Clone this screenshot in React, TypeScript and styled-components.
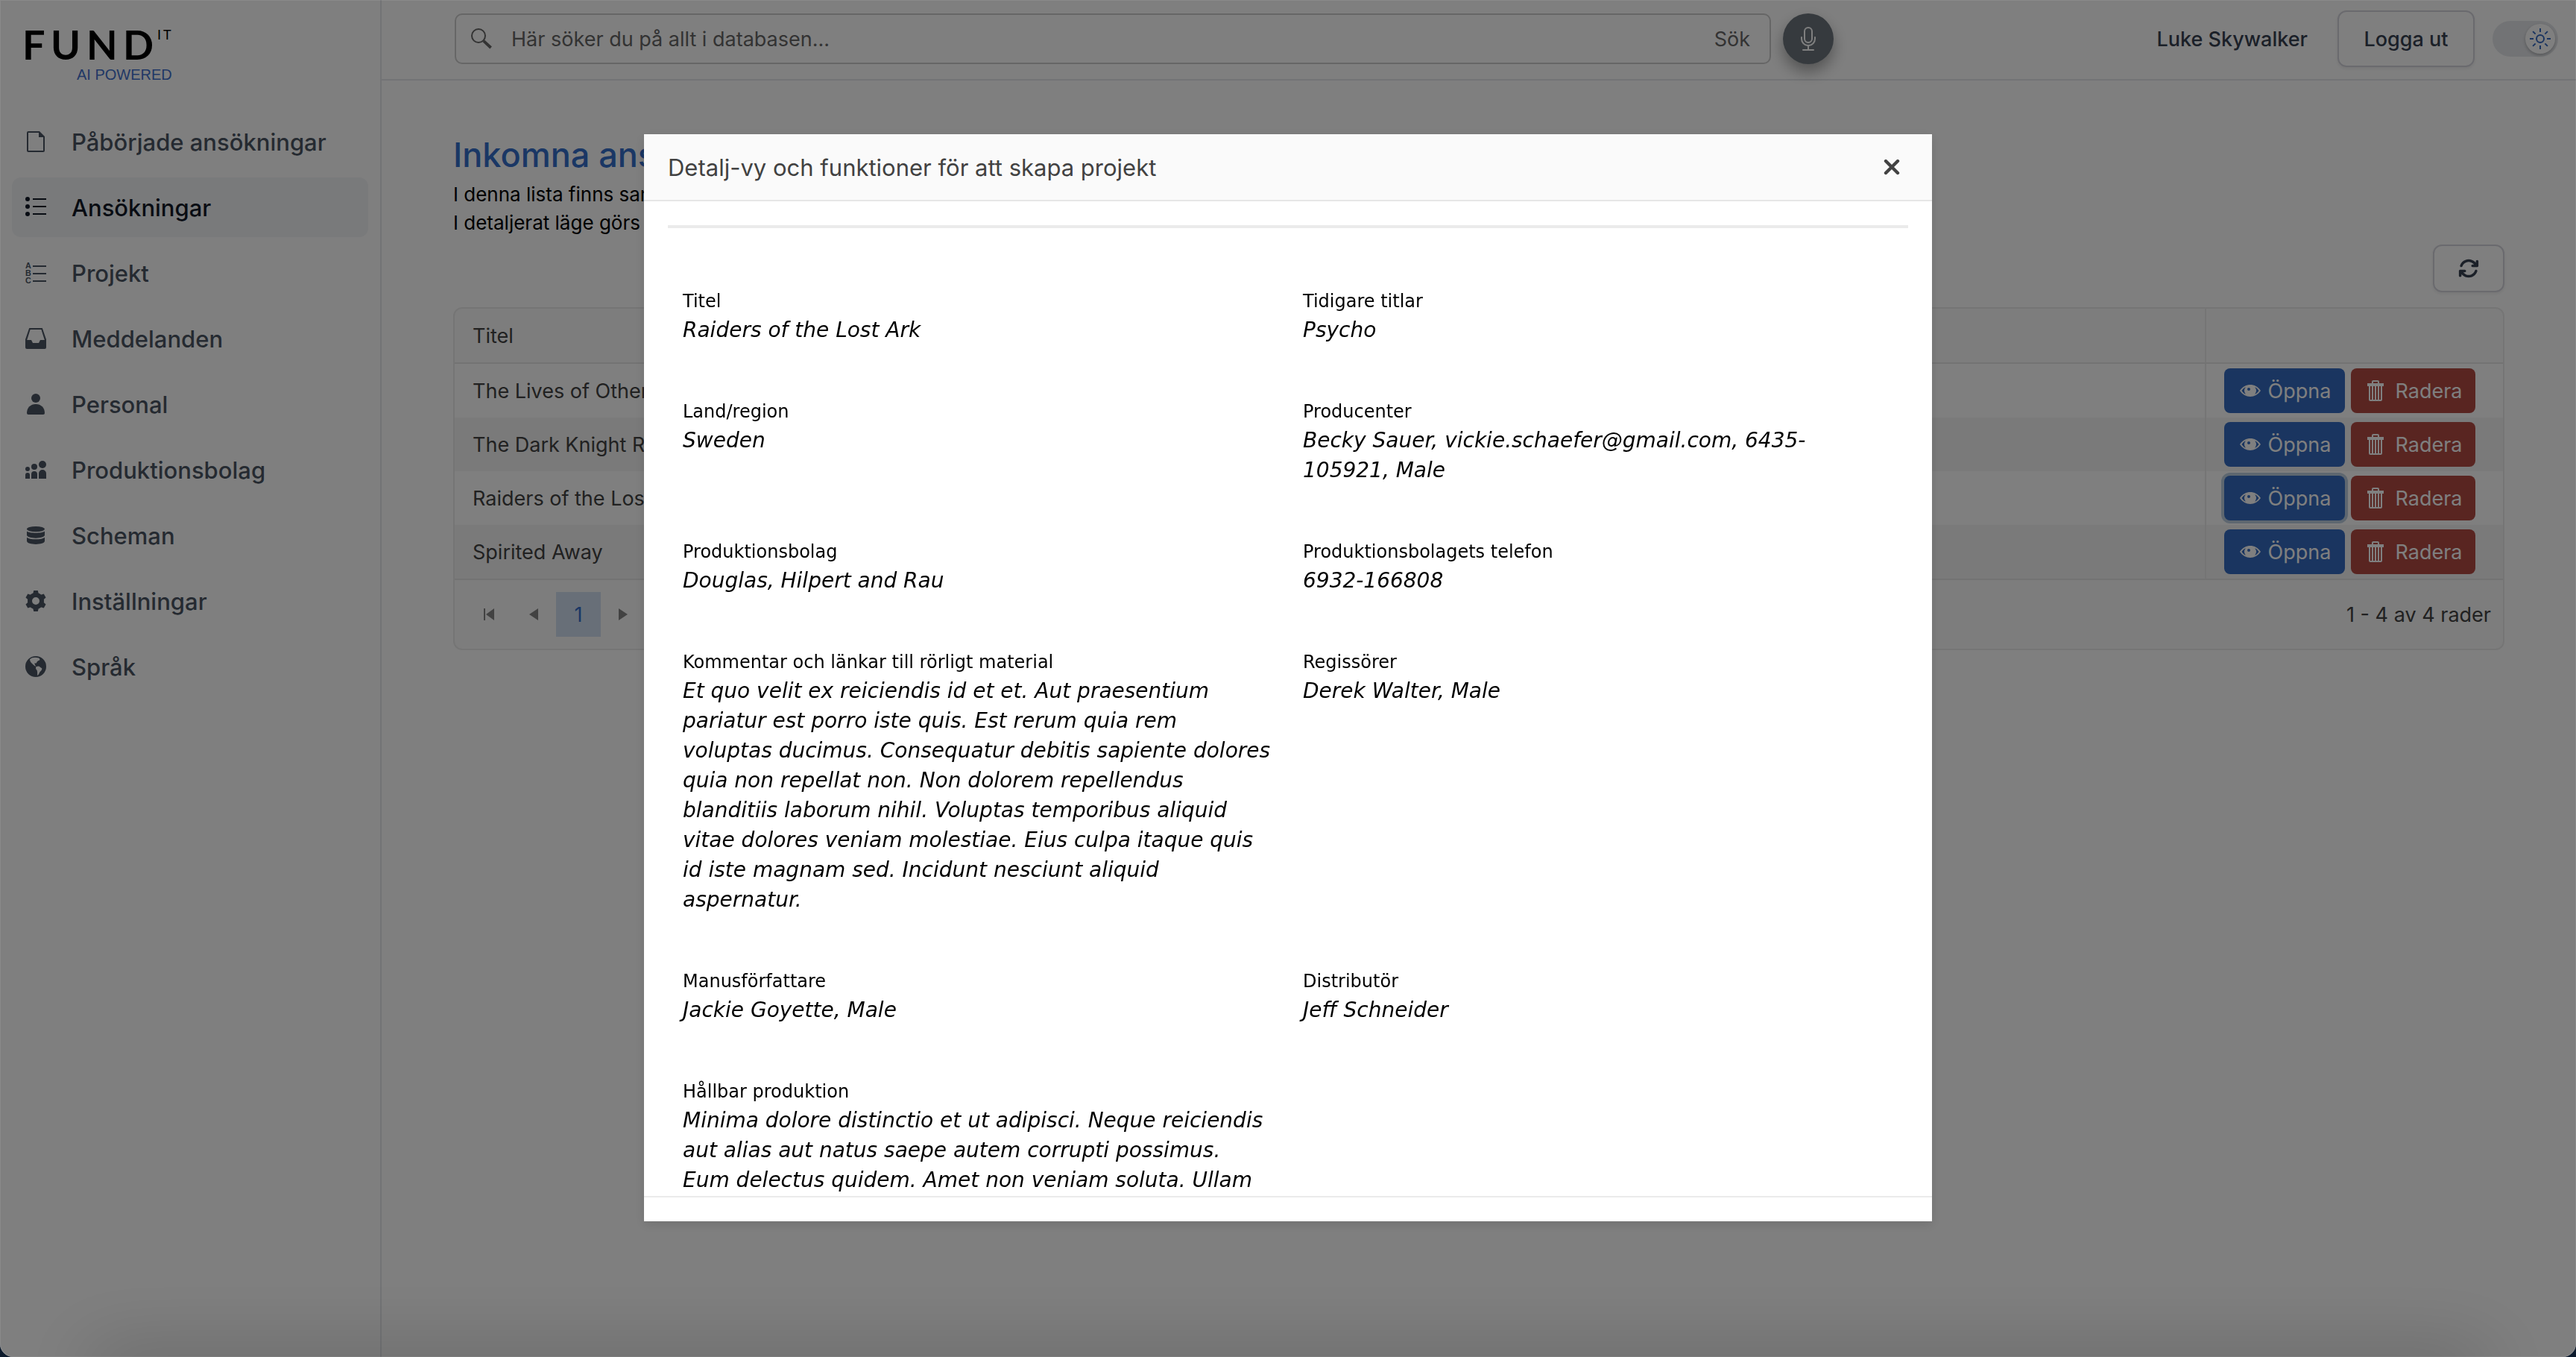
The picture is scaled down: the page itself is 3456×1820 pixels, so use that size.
import React from "react";
import styled, { createGlobalStyle } from "styled-components";
import { BsMic } from "react-icons/bs";
import { FaArrowsRotate } from "react-icons/fa6";

const UI = `Inter, Roboto, "Liberation Sans", sans-serif`;
const DETAIL = `"DejaVu Sans", "Noto Sans", sans-serif`;

const GlobalStyle = createGlobalStyle`
  *, *::before, *::after { box-sizing: border-box; }
  html, body { margin: 0; background: #0c1a2c; overflow: hidden; }
  body { font-family: ${UI}; color: #424242; }
  button, input { font-family: inherit; }
  h1, h2, p, ul, dl, dd { margin: 0; padding: 0; }
`;

/* ---------- shell ---------- */
const Shell = styled.div`
  display: flex;
  min-height: 100vh;
  background: #fff;
  border-radius: 0 0 18px 18px;
`;
const Sidebar = styled.aside`
  width: 512px;
  flex: none;
  border-right: 2px solid #e5e7eb;
`;
const LogoLink = styled.a`
  display: block;
  padding: 16px 28px 0;
  height: 142px;
`;
const NavList = styled.ul`
  list-style: none;
  display: flex;
  flex-direction: column;
  gap: 8px;
  padding: 8px 16px;
`;
const NavLink = styled.a<{ $active?: boolean }>`
  display: flex;
  align-items: center;
  gap: 32px;
  height: 80px;
  padding: 0 16px;
  border-radius: 12px;
  font-size: 31px;
  font-weight: 500;
  text-decoration: none;
  color: ${(p) => (p.$active ? "#111827" : "#4b5563")};
  background: ${(p) => (p.$active ? "#f3f4f6" : "transparent")};
`;
const Column = styled.div`
  flex: 1;
  min-width: 0;
`;

/* ---------- top bar ---------- */
const TopBar = styled.header`
  display: flex;
  align-items: center;
  height: 108px;
  padding: 0 24px 2px 98px;
  border-bottom: 2px solid #e5e7eb;
`;
const SearchForm = styled.form`
  display: flex;
  align-items: center;
  flex: 0 1 1766px;
  height: 68px;
  padding: 0 18px;
  gap: 24px;
  border: 2px solid #ccc;
  border-radius: 10px;
  color: #666;
`;
const SearchInput = styled.input`
  flex: 1;
  min-width: 0;
  border: 0;
  outline: 0;
  padding: 0;
  background: transparent;
  font-size: 27px;
  color: #666;
  &::placeholder { color: #666; opacity: 1; }
`;
const SearchButton = styled.button`
  border: 0;
  padding: 0 8px;
  background: transparent;
  font-size: 27px;
  color: #666;
`;
const MicButton = styled.button`
  display: grid;
  place-items: center;
  width: 68px;
  height: 68px;
  margin-left: 16px;
  padding: 0;
  border: 0;
  border-radius: 50%;
  background: #6c757d;
  color: #fff;
  box-shadow: 0 10px 20px rgba(0, 0, 0, 0.35);
`;
const Account = styled.div`
  display: flex;
  align-items: center;
  margin-left: auto;
`;
const UserName = styled.span`
  font-size: 27px;
  font-weight: 500;
  color: #374151;
  margin-right: 40px;
`;
const OutlineButton = styled.button<{ $w: number; $h: number }>`
  display: grid;
  place-items: center;
  width: ${(p) => p.$w}px;
  height: ${(p) => p.$h}px;
  padding: 0;
  border: 2px solid #d4d4dc;
  border-radius: 12px;
  background: transparent;
  font-size: 27px;
  font-weight: 500;
  color: #374151;
  box-shadow: 0 2px 4px rgba(0, 0, 0, 0.08);
`;
const ThemeSwitch = styled.button`
  display: flex;
  justify-content: flex-end;
  width: 88px;
  height: 48px;
  margin-left: 24px;
  padding: 4px;
  border: 0;
  border-radius: 24px;
  background: #e5e7eb;
`;
const Knob = styled.span`
  display: grid;
  place-items: center;
  width: 40px;
  height: 40px;
  border-radius: 50%;
  background: #fff;
  box-shadow: 0 2px 4px rgba(0, 0, 0, 0.25);
`;

/* ---------- page ---------- */
const Page = styled.main`
  padding: 76px 96px 0;
`;
const Heading = styled.h1`
  font-size: 45px;
  line-height: 48px;
  font-weight: 500;
  color: #346eca;
`;
const Intro = styled.p`
  margin-top: 10px;
  font-size: 26px;
  line-height: 38px;
  color: #000;
`;
const Tools = styled.div`
  display: flex;
  justify-content: flex-end;
  margin: 10px 0 20px;
`;
const Grid = styled.section`
  border: 2px solid #ebebeb;
  border-radius: 12px;
  overflow: hidden;
  background: #fafafa;
`;
const Table = styled.table`
  width: 100%;
  border-collapse: separate;
  border-spacing: 0;
  font-size: 27px;
  th, td { text-align: left; font-weight: 400; padding: 0 24px; }
  th { height: 74px; border-bottom: 2px solid #e6e6e6; }
  td { height: 72px; }
  th + th, td + td { border-left: 2px solid #ebebeb; width: 400px; }
  tbody tr { background: #fff; }
  tbody tr:nth-child(even) { background: #f5f5f5; }
`;
const RowActions = styled.div`
  display: flex;
  gap: 8px;
`;
const ActionButton = styled.button<{ $danger?: boolean; $focused?: boolean }>`
  display: flex;
  align-items: center;
  justify-content: center;
  gap: ${(p) => (p.$danger ? 10 : 8)}px;
  width: ${(p) => (p.$danger ? 167 : 162)}px;
  height: 60px;
  padding: 0;
  border: 0;
  border-radius: 8px;
  font-size: 27px;
  color: #fff;
  background: ${(p) => (p.$danger ? "#b24a43" : "#346bc0")};
  box-shadow: ${(p) => (p.$focused ? "0 0 0 4px #bccee0" : "none")};
`;
const Pager = styled.nav`
  display: flex;
  align-items: center;
  height: 94px;
  padding: 0 16px;
  border-top: 2px solid #e6e6e6;
  font-size: 27px;
`;
const PagerButton = styled.button<{ $current?: boolean }>`
  display: grid;
  place-items: center;
  width: 60px;
  height: 60px;
  padding: 0;
  border: 0;
  font-size: 27px;
  color: ${(p) => (p.$current ? "#346eca" : "#858585")};
  background: ${(p) => (p.$current ? "#d0dff0" : "transparent")};
`;
const PagerInfo = styled.span`
  margin-left: auto;
`;

/* ---------- dialog ---------- */
const Overlay = styled.div`
  position: fixed;
  inset: 0;
  display: flex;
  flex-direction: column;
  align-items: center;
  padding: 180px 0 182px;
  overflow: hidden;
  border-radius: 0 0 18px 18px;
  background: rgba(0, 0, 0, 0.5);
  box-shadow: inset 0 0 0 1px rgba(255, 255, 255, 0.08);

  &::after {
    content: "";
    position: absolute;
    left: 120px;
    right: 120px;
    bottom: -40px;
    height: 40px;
    box-shadow: 0 0 100px rgba(0, 0, 0, 0.3);
  }
`;
const Dialog = styled.section`
  display: flex;
  flex-direction: column;
  flex: 1;
  min-height: 0;
  width: 50%;
  background: #fff;
  box-shadow: 0 4px 14px rgba(0, 0, 0, 0.12);
`;
const DialogBar = styled.header`
  display: flex;
  align-items: center;
  justify-content: space-between;
  height: 90px;
  flex: none;
  padding: 0 36px 0 32px;
  background: #fafafa;
  border-bottom: 2px solid #e6e6e6;
`;
const DialogTitle = styled.h2`
  font-size: 31px;
  font-weight: 400;
  color: #424242;
`;
const CloseButton = styled.button`
  display: grid;
  place-items: center;
  width: 36px;
  height: 36px;
  padding: 0;
  border: 0;
  background: transparent;
  color: #424242;
`;
const DialogBody = styled.div`
  flex: 1;
  min-height: 0;
  overflow: hidden;
  padding: 32px 32px 0;
  font-family: ${DETAIL};
  color: #000;
`;
const Details = styled.dl`
  display: grid;
  grid-template-columns: 1fr 1fr;
  row-gap: 70px;
  border-top: 4px solid #ebebeb;
  padding-top: 79px;
`;
const Field = styled.div`
  padding: 0 20px;
`;
const Term = styled.dt`
  font-size: 24px;
  line-height: 38px;
`;
const Value = styled.dd`
  font-size: 28px;
  line-height: 40px;
  font-style: italic;
  white-space: pre-line;
`;
const DialogFoot = styled.footer`
  height: 34px;
  flex: none;
  border-top: 2px solid #ebebeb;
`;

/* ---------- icons on a 16-unit grid ---------- */
const IconSvg = styled.svg`
  flex: none;
  width: 32px;
  height: 32px;
  fill: currentColor;
`;
const Icon = ({ children }: { children: React.ReactNode }) => (
  <IconSvg viewBox="0 0 16 16" aria-hidden="true">{children}</IconSvg>
);
const FileIcon = () => (
  <Icon>
    <path fillRule="evenodd" d="M3 1h7.500L14 4.500V14a1 1 0 0 1-1 1H3a1 1 0 0 1-1-1V2a1 1 0 0 1 1-1zm0 1v12h10V5h-3V2z" />
  </Icon>
);
const ListIcon = () => (
  <Icon>
    <circle cx="2.5" cy="2.5" r="1.5" />
    <circle cx="2.5" cy="7.5" r="1.5" />
    <circle cx="2.5" cy="12.5" r="1.5" />
    <path d="M6 2h9v1H6zM6 7h9v1H6zM6 12h9v1H6z" />
  </Icon>
);
const AbcListIcon = () => (
  <Icon>
    <g fontFamily="Liberation Sans, sans-serif" fontWeight="700" fontSize="5.4" textAnchor="middle">
      <text x="3" y="5">A</text>
      <text x="3" y="10">B</text>
      <text x="3" y="15">C</text>
    </g>
    <path d="M6 3h9v1H6zM6 8h9v1H6zM6 13h9v1H6z" />
  </Icon>
);
const InboxIcon = () => (
  <Icon>
    <path fillRule="evenodd" d="M3.6 1h8.8L15 8.6V14a1 1 0 0 1-1 1H2a1 1 0 0 1-1-1V8.6zM4.3 2 2.1 9H5l1 2h4l1-2h2.9L11.7 2z" />
  </Icon>
);
const UserIcon = () => (
  <Icon>
    <circle cx="8" cy="4" r="3" />
    <path d="M2 14c0-3.6 2.5-6 6-6s6 2.4 6 6a1 1 0 0 1-1 1H3a1 1 0 0 1-1-1z" />
  </Icon>
);
const CompanyIcon = () => (
  <Icon>
    <circle cx="2.5" cy="7.5" r="1.5" />
    <circle cx="7" cy="6" r="2" />
    <circle cx="12.5" cy="4.5" r="2.5" />
    <path d="M1 14v-2.5a1.5 1.5 0 0 1 3 0V14zM5 14v-3a2 2 0 0 1 4 0v3zM10 14v-3.5a2.5 2.5 0 0 1 5 0V14z" />
  </Icon>
);
const DatabaseIcon = () => (
  <Icon>
    <ellipse cx="8" cy="3.8" rx="6" ry="1.8" />
    <path d="M2 5.2c1.5 1.5 10.5 1.5 12 0v2.6c0 2.7-12 2.7-12 0z" />
    <path d="M2 9.4c1.5 1.7 10.5 1.7 12 0v2.4c0 2.9-12 2.9-12 0z" />
  </Icon>
);
const GearIcon = () => (
  <Icon>
    <circle cx="8" cy="8" r="4" fill="none" stroke="currentColor" strokeWidth="3" />
    {[0, 60, 120, 180, 240, 300].map((a) => (
      <path key={a} d="M6.6 1h2.8l.6 2.8H6z" transform={`rotate(${a} 8 8)`} />
    ))}
  </Icon>
);
const GlobeIcon = () => (
  <Icon>
    <path
      fillRule="evenodd"
      d="M8 1a7 7 0 1 1 0 14A7 7 0 0 1 8 1zM4 3.1C4.1 4.7 5 5.6 6.3 6.7c.7.6 1.2.9 1.7 1.2C7.7 7 7 6.3 7.2 5.8c.5-.3.9.2 1.3-.3.3-.9 1-1.3 2-1.7.5-.4 0-1-.4-1.5C8 1.5 5.5 1.7 4 3.1zM8.3 8c-.5.8-.4 1.8.5 2.5.4 1.1.2 2.3.3 3.5 1-.7 1.2-1.6 1.7-2.5.8-.7 1.6-1.5 1.3-2.4-.9-.4-1.5-1-2.1-1.3z"
    />
  </Icon>
);
const SearchIcon = () => (
  <Icon>
    <circle cx="6" cy="6" r="4.5" fill="none" stroke="currentColor" />
    <path d="m9.4 9.4 4.9 4.6" stroke="currentColor" strokeWidth="1.9" />
  </Icon>
);
const EyeIcon = () => (
  <Icon>
    <path
      fillRule="evenodd"
      d="M1 8c3.5-5.3 10.5-5.3 14 0-3.5 5.3-10.5 5.3-14 0zm1.2 0c.8 1.2 1.7 1.9 2.7 2.4a4 4 0 0 1 0-4.8C3.9 6.1 3 6.8 2.2 8zm11.6 0c-.8-1.2-1.7-1.9-2.7-2.4a4 4 0 0 1 0 4.8c1-.5 1.9-1.2 2.7-2.4zM7 6a1 1 0 1 0 0 2 1 1 0 0 0 0-2z"
    />
  </Icon>
);
const TrashIcon = () => (
  <Icon>
    <path
      fillRule="evenodd"
      d="M5.5 3V2a1 1 0 0 1 1-1h3a1 1 0 0 1 1 1v1h3v2h-1v9a1 1 0 0 1-1 1h-7a1 1 0 0 1-1-1V5h-1V3zm1 0h3V2h-3zm-2 2v9h1V5zm2 0v9h1V5zm2 0v9h1V5zm2 0v9h1V5z"
    />
  </Icon>
);
const CloseIcon = () => (
  <Icon>
    <path d="m4 4 8 8M12 4l-8 8" fill="none" stroke="currentColor" strokeWidth="2.2" strokeLinecap="round" />
  </Icon>
);
const SunIcon = () => (
  <svg width="32" height="32" viewBox="0 0 32 32" fill="none" stroke="#3468c0" strokeWidth="2" aria-hidden="true">
    <circle cx="16" cy="16" r="5" />
    {[0, 45, 90, 135, 180, 225, 270, 315].map((a) => (
      <path key={a} d="M16 2v5" transform={`rotate(${a} 16 16)`} />
    ))}
  </svg>
);
const Logo = () => (
  <svg width="220" height="104" viewBox="0 0 220 104" role="img" aria-label="FUND IT">
    <text x="2 40 88 137" y="64" fontFamily="Lato, sans-serif" fontWeight="700" fontSize="54" fill="#000">FUND</text>
    <text x="183 191" y="37" fontFamily="Lato, sans-serif" fontSize="18" fill="#000">IT</text>
    <text x="75" y="91" fontFamily="Liberation Sans, sans-serif" fontSize="20" fill="#4270cc">AI POWERED</text>
  </svg>
);

/* ---------- data ---------- */
const nav = [
  { label: "Påbörjade ansökningar", icon: <FileIcon /> },
  { label: "Ansökningar", icon: <ListIcon />, active: true },
  { label: "Projekt", icon: <AbcListIcon /> },
  { label: "Meddelanden", icon: <InboxIcon /> },
  { label: "Personal", icon: <UserIcon /> },
  { label: "Produktionsbolag", icon: <CompanyIcon /> },
  { label: "Scheman", icon: <DatabaseIcon /> },
  { label: "Inställningar", icon: <GearIcon /> },
  { label: "Språk", icon: <GlobeIcon /> },
];
const rows = ["The Lives of Others", "The Dark Knight Rises", "Raiders of the Lost Ark", "Spirited Away"];
const openRow = 2;
const fields: [string, string][] = [
  ["Titel", "Raiders of the Lost Ark"],
  ["Tidigare titlar", "Psycho"],
  ["Land/region", "Sweden"],
  ["Producenter", "Becky Sauer, vickie.schaefer@gmail.com, 6435-\n105921, Male"],
  ["Produktionsbolag", "Douglas, Hilpert and Rau"],
  ["Produktionsbolagets telefon", "6932-166808"],
  [
    "Kommentar och länkar till rörligt material",
    "Et quo velit ex reiciendis id et et. Aut praesentium pariatur est porro iste quis. Est rerum quia rem\nvoluptas ducimus. Consequatur debitis sapiente dolores quia non repellat non. Non dolorem repellendus blanditiis laborum nihil. Voluptas temporibus aliquid vitae dolores veniam molestiae. Eius culpa itaque quis id iste magnam sed. Incidunt nesciunt aliquid aspernatur.",
  ],
  ["Regissörer", "Derek Walter, Male"],
  ["Manusförfattare", "Jackie Goyette, Male"],
  ["Distributör", "Jeff Schneider"],
  [
    "Hållbar produktion",
    "Minima dolore distinctio et ut adipisci. Neque reiciendis aut alias aut natus saepe autem corrupti possimus.\nEum delectus quidem. Amet non veniam soluta. Ullam",
  ],
];

export default function App() {
  return (
    <>
      <GlobalStyle />
      <Shell>
        <Sidebar>
          <LogoLink href="#"><Logo /></LogoLink>
          <nav>
            <NavList>
              {nav.map((n) => (
                <li key={n.label}>
                  <NavLink href="#" $active={n.active}>{n.icon}{n.label}</NavLink>
                </li>
              ))}
            </NavList>
          </nav>
        </Sidebar>
        <Column>
          <TopBar>
            <SearchForm role="search">
              <SearchIcon />
              <SearchInput type="search" aria-label="Sök i databasen" placeholder="Här söker du på allt i databasen..." />
              <SearchButton type="button">Sök</SearchButton>
            </SearchForm>
            <MicButton type="button" aria-label="Röstsökning"><BsMic size={32} /></MicButton>
            <Account>
              <UserName>Luke Skywalker</UserName>
              <OutlineButton type="button" $w={184} $h={76}>Logga ut</OutlineButton>
              <ThemeSwitch type="button" role="switch" aria-checked="true" aria-label="Ljust läge">
                <Knob><SunIcon /></Knob>
              </ThemeSwitch>
            </Account>
          </TopBar>
          <Page>
            <Heading>Inkomna ansökningar</Heading>
            <Intro>
              I denna lista finns samtliga inkomna ansökningar.<br />
              I detaljerat läge görs ansökan om till projekt.
            </Intro>
            <Tools>
              <OutlineButton type="button" $w={96} $h={64} aria-label="Uppdatera"><FaArrowsRotate size={28} /></OutlineButton>
            </Tools>
            <Grid>
              <Table>
                <thead>
                  <tr><th scope="col">Titel</th><th scope="col" aria-label="Åtgärder" /></tr>
                </thead>
                <tbody>
                  {rows.map((title, i) => (
                    <tr key={title}>
                      <td>{title}</td>
                      <td>
                        <RowActions>
                          <ActionButton type="button" $focused={i === openRow}><EyeIcon />Öppna</ActionButton>
                          <ActionButton type="button" $danger><TrashIcon />Radera</ActionButton>
                        </RowActions>
                      </td>
                    </tr>
                  ))}
                </tbody>
              </Table>
              <Pager aria-label="Sidor">
                <PagerButton type="button" aria-label="Första sidan"><Icon><path d="M4.5 4h1v8h-1zM11.5 4v8L6 8z" /></Icon></PagerButton>
                <PagerButton type="button" aria-label="Föregående sida"><Icon><path d="M11 4v8L5 8z" /></Icon></PagerButton>
                <PagerButton type="button" $current>1</PagerButton>
                <PagerButton type="button" aria-label="Nästa sida"><Icon><path d="M5 4v8l6-4z" /></Icon></PagerButton>
                <PagerButton type="button" aria-label="Sista sidan"><Icon><path d="M10.5 4h1v8h-1zM4.5 4v8L10 8z" /></Icon></PagerButton>
                <PagerInfo>1 - 4 av 4 rader</PagerInfo>
              </Pager>
            </Grid>
          </Page>
        </Column>
      </Shell>
      <Overlay>
        <Dialog role="dialog" aria-modal="true" aria-labelledby="dialog-title">
          <DialogBar>
            <DialogTitle id="dialog-title">Detalj-vy och funktioner för att skapa projekt</DialogTitle>
            <CloseButton type="button" aria-label="Stäng"><CloseIcon /></CloseButton>
          </DialogBar>
          <DialogBody>
            <Details>
              {fields.map(([term, value]) => (
                <Field key={term}>
                  <Term>{term}</Term>
                  <Value>{value}</Value>
                </Field>
              ))}
            </Details>
          </DialogBody>
          <DialogFoot />
        </Dialog>
      </Overlay>
    </>
  );
}
